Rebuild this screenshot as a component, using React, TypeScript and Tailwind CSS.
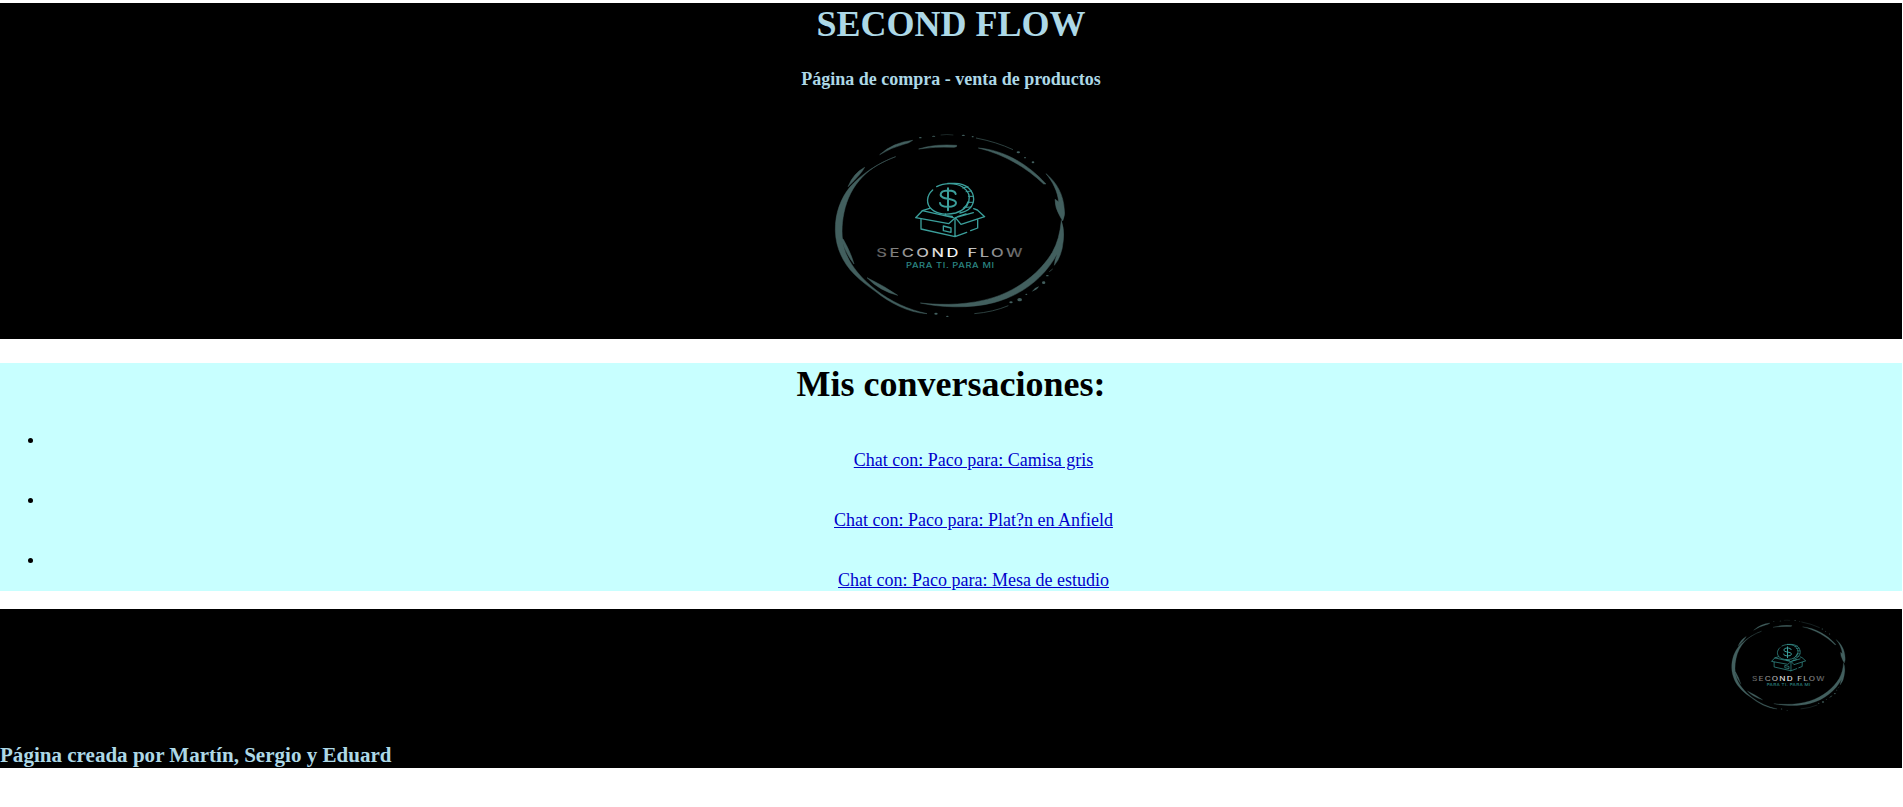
const conversations = [
  "Chat con: Paco para: Camisa gris",
  "Chat con: Paco para: Plat?n en Anfield",
  "Chat con: Paco para: Mesa de estudio",
];

function Logo({ className, id }: { className: string; id: string }) {
  return (
    <svg viewBox="0 0 780 630" className={className} role="img" aria-label="Second Flow">
      <defs>
        <linearGradient id={id} gradientUnits="userSpaceOnUse" x1="170" y1="0" x2="608" y2="0">
          <stop offset="0" stopColor="#5c5c5c" />
          <stop offset="0.3" stopColor="#b5b5b5" />
          <stop offset="0.5" stopColor="#ffffff" />
          <stop offset="0.7" stopColor="#b0b0b0" />
          <stop offset="1" stopColor="#5c5c5c" />
        </linearGradient>
      </defs>
      <g fill="#425f5e" stroke="#425f5e" strokeWidth="1.5">
        {/* left ring */}
        <path d="M227 110 C172 130 122 164 89 202 C62 236 45 280 46 332 C47 381 68 428 103 463 C124 484 146 500 166 514 C208 548 264 578 321 581 C265 569 213 545 168 510 C123 475 88 434 73 386 C64 355 64 316 72 278 C81 236 98 201 128 170 C155 143 187 125 227 110Z" />
        <path d="M63 355 Q76 400 102 432 Q93 399 70 358Z" />
        <path d="M141 473 Q178 512 233 526 Q195 499 141 473Z" />
        <path d="M84 200 Q100 160 134 142 Q124 162 84 200Z" />
        <path d="M179 104 Q220 67 278 61 Q269 69 251 73 Q213 83 179 104Z" />
        {/* top strokes */}
        <path d="M296 87 Q345 71 410 76 Q413 81 402 82 Q343 79 296 87Z" />
        <path d="M475 84 C550 90 622 130 678 192 L671 192 C616 140 551 103 475 84Z" />
        {/* right ring */}
        <path d="M678 161 C710 187 731 224 733 270 Q736 285 728 303 L719 287 Q705 264 705 238 L716 245 C713 215 698 184 678 161Z" />
        <path d="M724 301 Q734 329 730 361 Q726 409 703 436 Q704 419 712 401 C675 469 611 524 521 548 C448 567 360 562 301 549 C378 557 451 554 519 533 C598 508 662 455 697 397 Q719 358 724 301Z" />
        {/* speckles */}
        <g stroke="none">
          <path d="M635 515 Q645 502 657 499 Q652 510 635 515Z" />
          <ellipse cx="599" cy="539" rx="7" ry="5" />
          <ellipse cx="573" cy="547" rx="5" ry="3" />
          <ellipse cx="671" cy="488" rx="5" ry="4" />
          <ellipse cx="682" cy="467" rx="4" ry="2" />
          <ellipse cx="619" cy="523" rx="3" ry="2" />
          <ellipse cx="595" cy="97" rx="5" ry="3" />
          <ellipse cx="639" cy="127" rx="4" ry="3" />
          <ellipse cx="615" cy="113" rx="3" ry="2" />
          <ellipse cx="348" cy="581" rx="5" ry="3" />
          <ellipse cx="382" cy="589" rx="4" ry="2" />
          <ellipse cx="301" cy="53" rx="4" ry="2" />
          <ellipse cx="430" cy="46" rx="5" ry="2" />
          <ellipse cx="458" cy="50" rx="3" ry="2" />
          <ellipse cx="341" cy="49" rx="5" ry="1.5" />
        </g>
      </g>
      <g fill="none" stroke="#425f5e" strokeWidth="2">
        <path d="M463 581 Q520 576 565 557" />
        <path d="M468 54 Q530 66 579 89" />
        <path d="M362 45 Q380 42 400 45" opacity="0.6" />
        <path d="M688 455 L698 447" />
      </g>
      <g fill="none" stroke="#3b9f9b" strokeWidth="4" strokeLinejoin="round" strokeLinecap="round">
        {/* coin */}
        <path d="M338 210 C318 228 318 252 335 268 C351 283 381 285 407 279 C449 266 463 226 428 201 C406 187 372 188 350 200" />
        <path d="M383 190 H404 C441 190 461 213 461 238 C460 260 444 274 420 279 M430 265 Q442 256 444 246" />
        <path d="M445 229 H459 M444 247 H459 M428 204 L444 200 M438 215 L455 213 M438 262 L452 261" strokeWidth="3" />
        <path d="M407 222 C404 208 363 208 362 224 C361 240 408 233 408 249 C407 264 361 264 360 249 M384 205 V271" strokeWidth="6" />
        {/* box */}
        <path d="M329 265 L307 272 L287 293 L386 311 L406 293 L423 313 L494 290 L472 270 L461 266" />
        <path d="M307 272 L400 293 M376 282 L378 287 L397 289 M406 293 L460 278 M413 290 L438 282" />
        <path d="M303 298 V327 L405 350 V297 M405 350 L440 337 M452 332 L473 324 V299" />
        <path d="M370 318 L393 324 V337 L370 332Z" />
      </g>
      <g fontFamily="Inter, 'Liberation Sans', sans-serif">
        <text x="169" y="410" fontSize="34" fontWeight="500" fill={`url(#${id})`} textLength="446" lengthAdjust="spacingAndGlyphs" letterSpacing="5">
          SECOND FLOW
        </text>
        <text x="258" y="443" fontSize="23" fontWeight="500" fill="#2b8582" textLength="266" lengthAdjust="spacingAndGlyphs" letterSpacing="1.5">
          PARA TI. PARA MI
        </text>
      </g>
    </svg>
  );
}

export default function App() {
  return (
    <div className="h-[807px] overflow-hidden bg-white pt-[3px] pr-px font-['Liberation_Serif',serif] text-[18px] leading-[20px] text-black">
      <header className="flex h-[336px] flex-col items-center bg-black text-[#add8e6]">
        <h1 className="text-[36px] leading-[43px] font-bold">SECOND FLOW</h1>
        <h4 className="mt-[23px] text-[18px] leading-[20px] font-bold">Página de compra - venta de productos</h4>
        <Logo id="headerLogo" className="mt-[31px] ml-[-2px] h-[210px] w-[260px]" />
      </header>

      <main className="mt-6 h-[228px] bg-[#c8ffff] text-center">
        <h1 className="text-[36px] leading-[43px] font-bold">Mis conversaciones:</h1>
        <ul className="mt-[24px] pl-[45px]">
          {conversations.map((title) => (
            <li key={title} className="flex h-[60px] flex-col">
              <span className="-ml-[17px] flex h-5 items-start pt-[8px]">
                <span className="size-[5px] rounded-full bg-black" />
              </span>
              <a href="#" className="self-center text-[#0000cc] underline">
                {title}
              </a>
            </li>
          ))}
        </ul>
      </main>

      <footer className="mt-[18px] flex h-[159px] flex-col items-end justify-between bg-black text-[#add8e6]">
        <Logo id="footerLogo" className="mt-[4px] mr-[49px] h-[104px] w-[129px]" />
        <h3 className="mb-px self-start text-[21.06px] leading-[24px] font-bold">Página creada por Martín, Sergio y Eduard</h3>
      </footer>
    </div>
  );
}
